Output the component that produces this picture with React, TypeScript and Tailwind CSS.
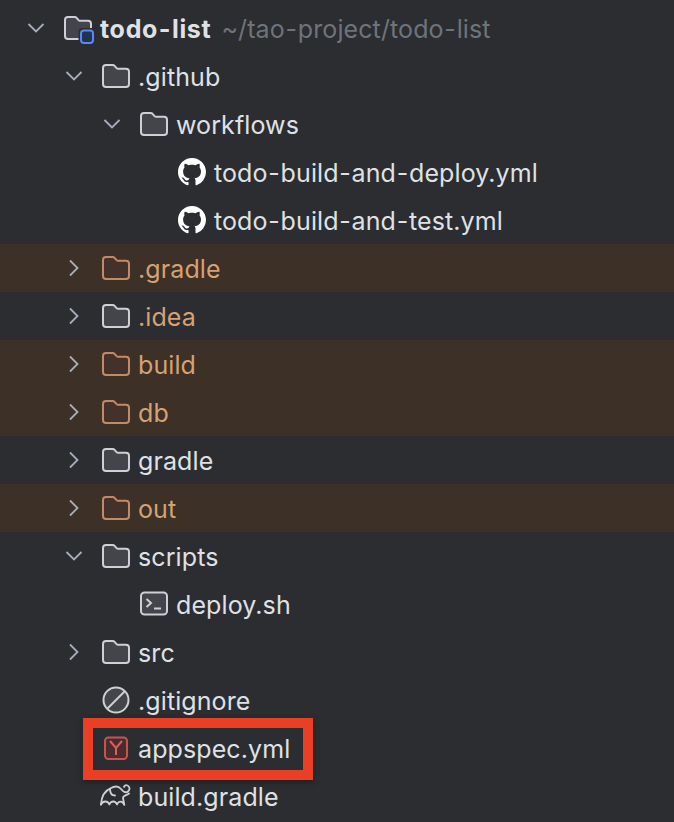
const FONT = "font-['Inter','Liberation_Sans',sans-serif]";

type IconKind = "project" | "folder" | "excluded" | "github" | "terminal" | "ignore" | "yaml" | "gradle";

interface Row {
  name: string;
  depth: number;
  icon: IconKind;
  open?: boolean;
  excluded?: boolean;
  ignoredText?: boolean;
}

const ROWS: Row[] = [
  { name: "todo-list", depth: 0, icon: "project", open: true },
  { name: ".github", depth: 1, icon: "folder", open: true },
  { name: "workflows", depth: 2, icon: "folder", open: true },
  { name: "todo-build-and-deploy.yml", depth: 3, icon: "github" },
  { name: "todo-build-and-test.yml", depth: 3, icon: "github" },
  { name: ".gradle", depth: 1, icon: "excluded", open: false, excluded: true, ignoredText: true },
  { name: ".idea", depth: 1, icon: "folder", open: false, ignoredText: true },
  { name: "build", depth: 1, icon: "excluded", open: false, excluded: true, ignoredText: true },
  { name: "db", depth: 1, icon: "excluded", open: false, excluded: true, ignoredText: true },
  { name: "gradle", depth: 1, icon: "folder", open: false },
  { name: "out", depth: 1, icon: "excluded", open: false, excluded: true, ignoredText: true },
  { name: "scripts", depth: 1, icon: "folder", open: true },
  { name: "deploy.sh", depth: 2, icon: "terminal" },
  { name: "src", depth: 1, icon: "folder", open: false },
  { name: ".gitignore", depth: 1, icon: "ignore" },
  { name: "appspec.yml", depth: 1, icon: "yaml" },
  { name: "build.gradle", depth: 1, icon: "gradle" },
];

const DEPTH_PADDING = ["pl-[26px]", "pl-[64px]", "pl-[102px]", "pl-[140px]"];

const FOLDER_D =
  "M1 6a3 3 0 0 1 3-3h6.6c.8 0 1.5.3 2 .9l2 2.2c.4.4.9.7 1.4.7H24a3 3 0 0 1 3 3V22a3 3 0 0 1-3 3H4a3 3 0 0 1-3-3z";

function Folder({ excluded }: { excluded?: boolean }) {
  return (
    <svg width="28" height="28" viewBox="0 0 28 28" className="shrink-0">
      <path
        d={FOLDER_D}
        fill={excluded ? "#43322b" : "#43454a"}
        stroke={excluded ? "#c48a66" : "#ced0d6"}
        strokeWidth="2"
      />
    </svg>
  );
}

function Icon({ kind }: { kind: IconKind }) {
  if (kind === "folder") return <Folder />;
  if (kind === "excluded") return <Folder excluded />;
  if (kind === "project") {
    return (
      <svg width="32" height="32" viewBox="0 0 32 32" className="shrink-0">
        <g transform="translate(0 2)">
          <path d={FOLDER_D} fill="#43454a" stroke="#ced0d6" strokeWidth="2" />
        </g>
        <rect x="14.5" y="16" width="17" height="16" rx="4" fill="#2b2d30" />
        <rect x="17" y="18.5" width="12" height="12.5" rx="3" fill="#25324d" stroke="#548af7" strokeWidth="2" />
      </svg>
    );
  }
  if (kind === "github") {
    return (
      <svg width="28" height="28" viewBox="0 0 16 16" className="shrink-0">
        <path
          fill="#ffffff"
          d="M8 0C3.58 0 0 3.58 0 8c0 3.54 2.29 6.53 5.47 7.59.4.07.55-.17.55-.38 0-.19-.01-.82-.01-1.49-2.01.37-2.53-.49-2.69-.94-.09-.23-.48-.94-.82-1.13-.28-.15-.68-.52-.01-.53.63-.01 1.08.58 1.23.82.72 1.21 1.87.87 2.33.66.07-.52.28-.87.51-1.07-1.78-.2-3.64-.89-3.64-3.95 0-.87.31-1.59.82-2.15-.08-.2-.36-1.02.08-2.12 0 0 .67-.21 2.2.82.64-.18 1.32-.27 2-.27s1.36.09 2 .27c1.53-1.04 2.2-.82 2.2-.82.44 1.1.16 1.92.08 2.12.51.56.82 1.27.82 2.15 0 3.07-1.87 3.75-3.65 3.95.29.25.54.73.54 1.48 0 1.07-.01 1.93-.01 2.2 0 .21.15.46.55.38A8.01 8.01 0 0 0 16 8c0-4.42-3.58-8-8-8z"
        />
      </svg>
    );
  }
  if (kind === "terminal") {
    return (
      <svg width="28" height="28" viewBox="0 0 28 28" fill="none" className="shrink-0">
        <rect x="1" y="2.5" width="26" height="22" rx="3.5" fill="#43454a" stroke="#ced0d6" strokeWidth="2" />
        <path d="M6.5 9l4.5 4-4.5 4" stroke="#ced0d6" strokeWidth="2" />
        <path d="M14 18.5h7" stroke="#ced0d6" strokeWidth="2" />
      </svg>
    );
  }
  if (kind === "ignore") {
    return (
      <svg width="28" height="28" viewBox="0 0 28 28" fill="none" className="shrink-0">
        <circle cx="14" cy="14" r="12.5" fill="#43454a" stroke="#ced0d6" strokeWidth="2" />
        <path d="M5.5 22.5l17-17" stroke="#ced0d6" strokeWidth="2" />
      </svg>
    );
  }
  if (kind === "yaml") {
    return (
      <svg width="28" height="28" viewBox="0 0 28 28" fill="none" className="shrink-0">
        <rect x="3" y="3.5" width="22" height="21.5" rx="3.5" fill="#4a2c2c" stroke="#c75450" strokeWidth="2" />
        <path d="M8 7l6 7 6-7M14 14v7" stroke="#d9605b" strokeWidth="2" />
      </svg>
    );
  }
  return (
    <svg
      width="32"
      height="24"
      viewBox="0 0 32 24"
      fill="none"
      stroke="#ced0d6"
      strokeWidth="1.8"
      strokeLinejoin="round"
      strokeLinecap="round"
      className="-ml-[2px] shrink-0"
    >
      <path d="M.9 20.5C1.500 13 5 6.500 10.500 4.300 14.500 2 18.500 2 21 5c2 2.500 4.500 4.500 7 2.500 2.500-2 1.500-5-.5-6-1.500-.7-3 0-3.500 1.500" />
      <path d="M29 9.500c-3 2.500-6 1.500-6 4.500l1.300 6.800C22.500 16.500 18.500 16.500 17 20.500 15.500 16.500 11 16.500 9.300 20.500 8 16.500 3 16.500.9 20.500" />
      <path d="M10 5c0 4 1.500 6.500 5 6.500" />
    </svg>
  );
}

function Chevron({ open }: { open: boolean }) {
  return (
    <svg width="20" height="20" viewBox="0 0 20 20" fill="none" stroke="#a8adbd" strokeWidth="1.8" className="shrink-0">
      {open ? <path d="M2.500 6l7.500 7.500L17.500 6" /> : <path d="M6 2.500l7.500 7.500L6 17.500" />}
    </svg>
  );
}

// the reference font draws wider hyphens than our Inter
function Label({ text }: { text: string }) {
  const parts = text.split("-");
  return (
    <>
      {parts.map((part, i) => (
        <span key={i}>
          {i > 0 && <span className="mx-[0.7px]">-</span>}
          {part}
        </span>
      ))}
    </>
  );
}

function TreeRow({ row }: { row: Row }) {
  const isRoot = row.depth === 0;
  return (
    <div
      className={`flex h-12 items-center ${DEPTH_PADDING[row.depth]} ${row.excluded ? "bg-[#3c3027]" : ""}`}
    >
      <div className="flex h-5 w-[38px] shrink-0 items-center">
        {row.open !== undefined && <Chevron open={row.open} />}
      </div>
      <div className="flex h-7 w-7 shrink-0 items-center justify-start">
        <Icon kind={row.icon} />
      </div>
      <span
        className={`ml-2 whitespace-nowrap pt-[2px] text-[25px] leading-none ${
          row.ignoredText ? "text-[#d5a273]" : "text-[#dfe1e5]"
        } ${isRoot ? "font-bold tracking-[0.7px]" : "tracking-[0.1px]"}`}
      >
        <Label text={row.name} />
      </span>
      {isRoot && (
        <span className="ml-[10px] whitespace-nowrap pt-[2px] text-[25px] leading-none tracking-[0.1px] text-[#6f737a]">
          <Label text="~/tao-project/todo-list" />
        </span>
      )}
    </div>
  );
}

export default function App() {
  return (
    <div className={`relative h-[822px] w-[674px] overflow-hidden bg-[#2b2d30] pt-1 ${FONT}`}>
      {ROWS.map((row) => (
        <TreeRow key={row.name} row={row} />
      ))}
      {/* red annotation around appspec.yml */}
      <div className="absolute left-[83px] top-[718px] h-[62px] w-[230px] border-[10px] border-[#e94025] shadow-[0_2px_6px_rgba(0,0,0,0.35)]" />
    </div>
  );
}
